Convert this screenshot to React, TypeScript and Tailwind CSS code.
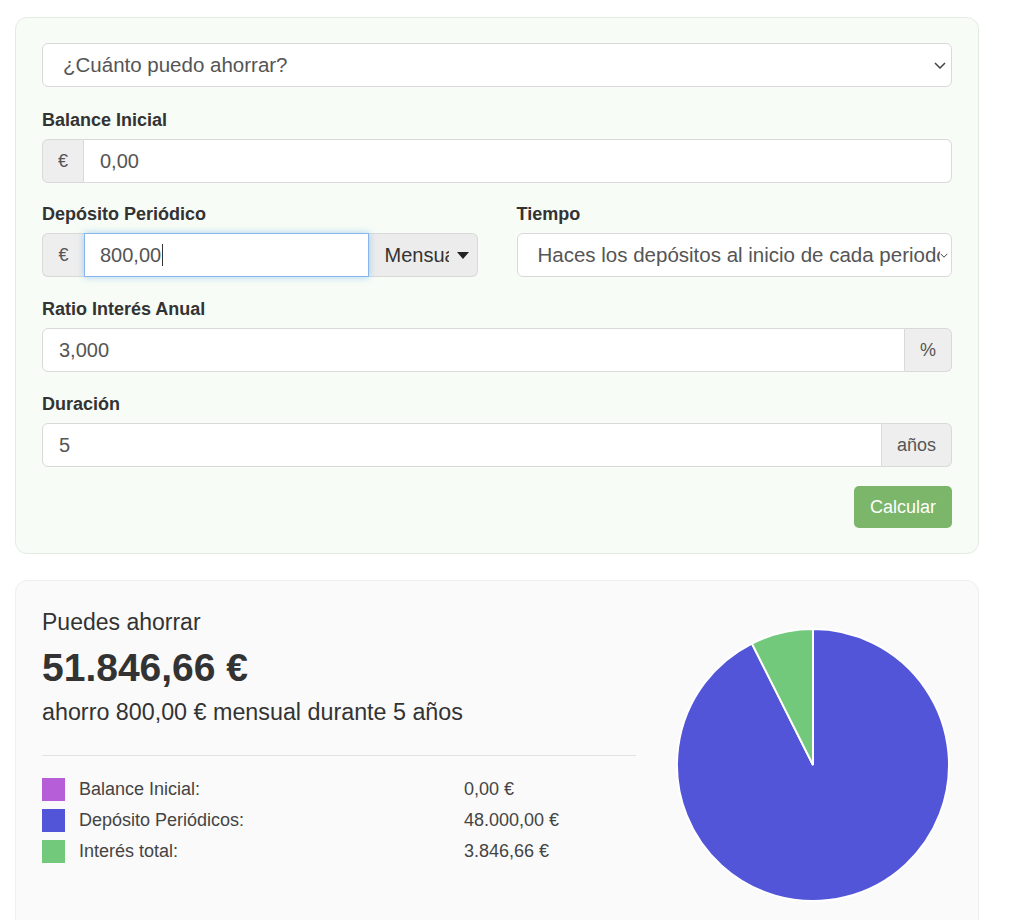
import { ReactNode } from "react";

function Chevron({ className }: { className?: string }) {
  return (
    <svg viewBox="0 0 12 7" className={className} fill="none">
      <path d="M1 1l5 5 5-5" stroke="#444" strokeWidth="1.5" />
    </svg>
  );
}

function FieldLabel({ children }: { children: ReactNode }) {
  return (
    <div className="mb-[9px] text-[18px] font-bold leading-[20px] text-[#333]">
      {children}
    </div>
  );
}

function Addon({
  children,
  className,
}: {
  children: ReactNode;
  className: string;
}) {
  return (
    <div
      className={`flex h-full items-center justify-center border border-[#d9d9d9] bg-[#eee] text-[18px] text-[#555] ${className}`}
    >
      {children}
    </div>
  );
}

const legend = [
  { label: "Balance Inicial:", value: "0,00 €", color: "bg-[#b55ed8]" },
  { label: "Depósito Periódicos:", value: "48.000,00 €", color: "bg-[#5255d7]" },
  { label: "Interés total:", value: "3.846,66 €", color: "bg-[#72c97b]" },
];

export default function App() {
  return (
    <div className="min-h-[920px] bg-white pl-[15px] pt-[17px] font-['Liberation_Sans',Arial,sans-serif] text-[#333]">
      {/* formulario */}
      <div className="w-[964px] rounded-[12px] border border-[#e3ece3] bg-[#f7fcf6] px-[26px] pb-[25px] pt-[25px]">
        <div className="flex h-[44px] items-center rounded-[6px] border border-[#d9d9d9] bg-white pl-[20px] pr-[5px] text-[20.5px] text-[#555]">
          <span className="flex-1">¿Cuánto puedo ahorrar?</span>
          <Chevron className="h-[7px] w-[12px]" />
        </div>

        <div className="mt-[23px]">
          <FieldLabel>Balance Inicial</FieldLabel>
          <div className="flex h-[44px]">
            <Addon className="w-[42px] rounded-l-[6px]">€</Addon>
            <div className="flex flex-1 items-center rounded-r-[6px] border border-l-0 border-[#d9d9d9] bg-white pl-[16px] text-[20px] text-[#555]">
              0,00
            </div>
          </div>
        </div>

        <div className="mt-[21px] grid grid-cols-2 gap-x-[39px]">
          <div>
            <FieldLabel>Depósito Periódico</FieldLabel>
            <div className="flex h-[44px]">
              <Addon className="w-[42px] rounded-l-[6px] border-r-0">€</Addon>
              <div className="relative z-10 flex flex-1 items-center border border-[#86b6ea] bg-white pl-[15px] text-[20px] text-[#555] shadow-[0_0_7px_rgba(102,175,233,0.55)]">
                800,00
                <span className="ml-[1px] h-[22px] w-px bg-[#333]" />
              </div>
              <div className="flex w-[109px] items-center rounded-r-[6px] border border-l-0 border-[#d9d9d9] bg-[#ececec] pl-[16px] pr-[8px] text-[20px] text-[#333]">
                <span className="w-[64px] overflow-hidden whitespace-nowrap">
                  Mensual
                </span>
                <svg viewBox="0 0 12 7" className="ml-[8px] h-[7px] w-[12px]">
                  <path d="M0 0h12L6 7z" fill="#222" />
                </svg>
              </div>
            </div>
          </div>
          <div>
            <FieldLabel>Tiempo</FieldLabel>
            <div className="flex h-[44px] items-center rounded-[6px] border border-[#d9d9d9] bg-white pl-[20px] pr-[3px] text-[20.5px] text-[#555]">
              <span className="flex-1 overflow-hidden whitespace-nowrap">
                Haces los depósitos al inicio de cada periodo
              </span>
              <Chevron className="h-[5px] w-[8px]" />
            </div>
          </div>
        </div>

        <div className="mt-[22px]">
          <FieldLabel>Ratio Interés Anual</FieldLabel>
          <div className="flex h-[44px]">
            <div className="flex flex-1 items-center rounded-l-[6px] border border-[#d9d9d9] bg-white pl-[16px] text-[20px] text-[#555]">
              3,000
            </div>
            <Addon className="w-[47px] rounded-r-[6px] border-l-0">%</Addon>
          </div>
        </div>

        <div className="mt-[22px]">
          <FieldLabel>Duración</FieldLabel>
          <div className="flex h-[44px]">
            <div className="flex flex-1 items-center rounded-l-[6px] border border-[#d9d9d9] bg-white pl-[16px] text-[20px] text-[#555]">
              5
            </div>
            <Addon className="w-[70px] rounded-r-[6px] border-l-0">años</Addon>
          </div>
        </div>

        <div className="mt-[19px] flex justify-end">
          <button
            type="button"
            className="h-[42px] rounded-[5px] bg-[#7bb66a] px-[16px] text-[18px] text-white"
          >
            Calcular
          </button>
        </div>
      </div>

      {/* resultado */}
      <div className="mt-[26px] flex w-[964px] items-start gap-[40px] rounded-[12px] border border-[#efefef] bg-[#fafafa] px-[26px] pb-[30px] pt-[29px]">
        <div className="w-[594px]">
          <div className="text-[23px] leading-[1.1]">Puedes ahorrar</div>
          <div className="mt-[12px] text-[39px] font-bold leading-[1.1]">
            51.846,66 €
          </div>
          <div className="mt-[10px] text-[23.3px] leading-[1.1]">
            ahorro 800,00 € mensual durante 5 años
          </div>
          <div className="mt-[29px] h-px bg-[#e3e3e3]" />
          <div className="mt-[22px] flex flex-col gap-[8px]">
            {legend.map((item) => (
              <div key={item.label} className="flex h-[23px] items-center text-[18px] text-[#444]">
                <span className={`h-[23px] w-[23px] ${item.color}`} />
                <span className="ml-[14px] w-[385px]">{item.label}</span>
                <span>{item.value}</span>
              </div>
            ))}
          </div>
        </div>
        <svg viewBox="0 0 274 274" className="mt-[18px] h-[274px] w-[274px] shrink-0">
          <path
            d="M137 137 L137 1 A136 136 0 1 1 75.87 15.51 Z"
            fill="#5355d8"
            stroke="#fff"
            strokeWidth="2"
          />
          <path
            d="M137 137 L75.87 15.51 A136 136 0 0 1 137 1 Z"
            fill="#73c97b"
            stroke="#fff"
            strokeWidth="2"
          />
        </svg>
      </div>
    </div>
  );
}
